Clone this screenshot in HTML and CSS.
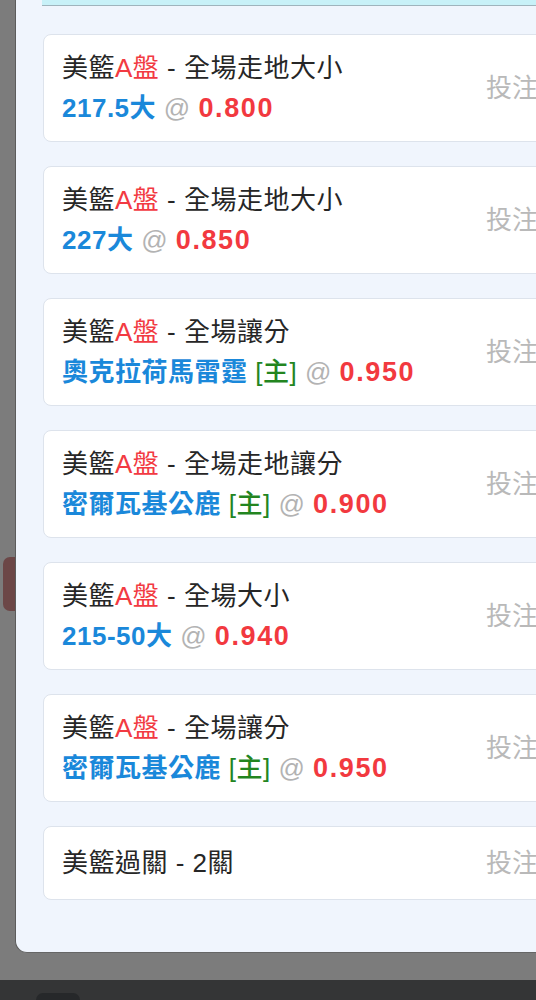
FILE: index.html
```html
<!DOCTYPE html>
<html lang="zh-Hant">
<head>
    <meta charset="utf-8">
    <title>投注單</title>
    <link rel="stylesheet" href="styles.css">
</head>
<body>
    <div class="screen">
        <div class="side">
            <div class="side-tab"></div>
        </div>
        <div class="panel">
            <div class="prev-card"></div>

            <div class="bet">
                <div class="info">
                    <div class="market">美籃<span class="red">A盤</span> - 全場走地大小</div>
                    <div class="pick"><span class="blue">217.5大</span> <span class="at">@</span> <span class="odds">0.800</span></div>
                </div>
                <div class="place">投注</div>
            </div>

            <div class="bet">
                <div class="info">
                    <div class="market">美籃<span class="red">A盤</span> - 全場走地大小</div>
                    <div class="pick"><span class="blue">227大</span> <span class="at">@</span> <span class="odds">0.850</span></div>
                </div>
                <div class="place">投注</div>
            </div>

            <div class="bet">
                <div class="info">
                    <div class="market">美籃<span class="red">A盤</span> - 全場讓分</div>
                    <div class="pick"><span class="blue">奧克拉荷馬雷霆</span> <span class="home">[主]</span> <span class="at">@</span> <span class="odds">0.950</span></div>
                </div>
                <div class="place">投注</div>
            </div>

            <div class="bet">
                <div class="info">
                    <div class="market">美籃<span class="red">A盤</span> - 全場走地讓分</div>
                    <div class="pick"><span class="blue">密爾瓦基公鹿</span> <span class="home">[主]</span> <span class="at">@</span> <span class="odds">0.900</span></div>
                </div>
                <div class="place">投注</div>
            </div>

            <div class="bet">
                <div class="info">
                    <div class="market">美籃<span class="red">A盤</span> - 全場大小</div>
                    <div class="pick"><span class="blue">215-50大</span> <span class="at">@</span> <span class="odds">0.940</span></div>
                </div>
                <div class="place">投注</div>
            </div>

            <div class="bet">
                <div class="info">
                    <div class="market">美籃<span class="red">A盤</span> - 全場讓分</div>
                    <div class="pick"><span class="blue">密爾瓦基公鹿</span> <span class="home">[主]</span> <span class="at">@</span> <span class="odds">0.950</span></div>
                </div>
                <div class="place">投注</div>
            </div>

            <div class="bet">
                <div class="info">
                    <div class="market">美籃過關 - 2關</div>
                </div>
                <div class="place">投注</div>
            </div>
        </div>
    </div>
    <div class="bottom-bar">
        <div class="bottom-tab"></div>
    </div>
</body>
</html>
```

FILE: styles.css
```css
html, body {
    margin: 0;
    height: 1000px;
    overflow: hidden;
}

body {
    background-color: #7c7c7c;
    font-family: "Liberation Sans", "Noto Sans CJK TC", sans-serif;
    color: #262626;
}

.screen {
    display: flex;
    width: 640px;
    height: 953px;
}

.side {
    width: 15px;
    flex-shrink: 0;
}

.side-tab {
    margin: 557px 0 0 3px;
    height: 54px;
    background-color: #6c4747;
    border-radius: 7px 0 0 7px;
}

.panel {
    flex: 1;
    background-color: #f0f5fd;
    border-left: 1px solid #5c5c5c;
    border-bottom: 1px solid #666;
    border-radius: 0 0 0 12px;
    padding: 0 0 0 26px;
}

.prev-card {
    height: 5px;
    background-color: #c8f1f8;
    border-bottom: 1px solid #9fb4bd;
    margin-bottom: 28px;
}

.bet {
    display: flex;
    align-items: center;
    margin: 0 0 24px 1px;
    padding: 13px 0 13px 18px;
    background-color: #fff;
    border: 1px solid #dde3ec;
    border-radius: 8px;
}

.info {
    width: 424px;
    flex-shrink: 0;
    font-size: 26px;
    line-height: 40px;
    letter-spacing: 0.5px;
}

.market {
    white-space: nowrap;
}

.pick {
    white-space: nowrap;
    font-weight: bold;
}

.red {
    color: #f23a42;
}

.blue {
    color: #1a88da;
}

.home {
    color: #23851f;
    font-weight: 500;
}

.at {
    color: #b3b3b3;
    font-weight: normal;
}

.odds {
    color: #f2393f;
    font-size: 27px;
    letter-spacing: 1.6px;
}

.place {
    height: 46px;
    line-height: 46px;
    font-size: 26px;
    color: #b9b9b9;
}

.bottom-bar {
    margin-top: 27px;
    height: 20px;
    background-color: #343536;
    position: relative;
}

.bottom-tab {
    position: absolute;
    left: 36px;
    bottom: 0;
    width: 44px;
    height: 7px;
    background-color: #26282a;
    border-radius: 8px 8px 0 0;
}
```
